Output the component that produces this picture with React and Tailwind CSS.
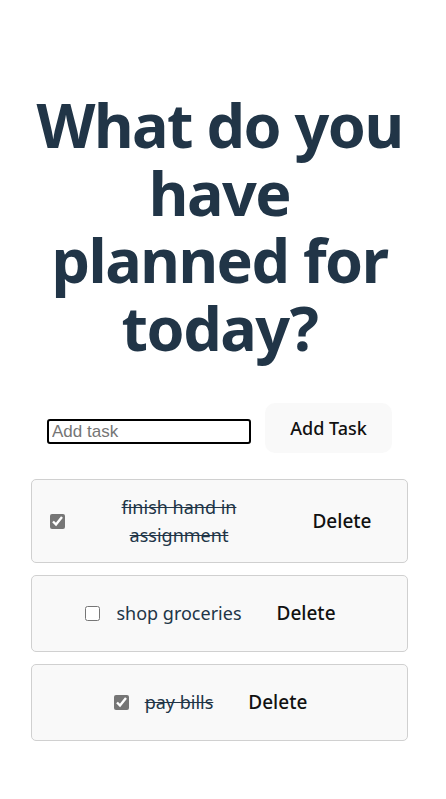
import React, { useState } from 'react';

const App = () => {
  const [tasks, setTasks] = useState([
    { id: 1, text: 'finish hand in assignment', done: true },
    { id: 2, text: 'shop groceries', done: false },
    { id: 3, text: 'pay bills', done: true }
  ]);
  const [input, setInput] = useState('');

  const addTask = () => {
    if (!input.trim()) return;
    setTasks([...tasks, { id: Date.now(), text: input, done: false }]);
    setInput('');
  };

  const toggle = (id) => {
    setTasks(tasks.map(t => (t.id === id ? { ...t, done: !t.done } : t)));
  };

  const remove = (id) => {
    setTasks(tasks.filter(t => t.id !== id));
  };

  return (
    <div className="min-h-screen bg-white font-['Noto_Sans',sans-serif] text-[#213547]">
      <div className="w-[377px] ml-[31px] pt-[91px] pb-10">
        <h1 className="text-[61px] leading-[67.5px] font-bold text-center tracking-[-1.5px]">
          What do you have planned for today?
        </h1>

        {/* formulario */}
        <div className="flex justify-center items-start gap-[14px] mt-[42px]">
          <input
            type="text"
            value={input}
            onChange={(e) => setInput(e.target.value)}
            placeholder="Add task"
            className="mt-[16px] w-[204px] h-[25px] px-[3px] border-2 border-black rounded-[3px] font-['Liberation_Sans',Arial,sans-serif] text-[17px] placeholder:text-[#757575] outline-none"
          />
          <button
            onClick={addTask}
            className="h-[50px] w-[127px] rounded-[10px] bg-[#f9f9f9] text-[18px] font-medium text-[#111]"
          >
            Add Task
          </button>
        </div>

        {/* lista */}
        <div className="flex flex-col gap-3 mt-[26px]">
          {tasks.map((task) => (
            <div
              key={task.id}
              className="flex items-center justify-center p-[12.5px] bg-[#f9f9f9] border border-[#d0d0d0] rounded-[5px]"
            >
              <input
                type="checkbox"
                checked={task.done}
                onChange={() => toggle(task.id)}
                className="w-[15px] h-[15px] ml-[5px] mr-[4px] accent-[#767676] shrink-0"
              />
              <span
                className={
                  'mx-3 text-center text-[18px] leading-[28.5px] ' +
                  (task.done ? 'line-through' : '')
                }
              >
                {task.text}
              </span>
              <button
                onClick={() => remove(task.id)}
                className="h-[50px] px-[23px] rounded-[10px] bg-[#f9f9f9] text-[19px] font-medium text-[#111] shrink-0"
              >
                Delete
              </button>
            </div>
          ))}
        </div>
      </div>
    </div>
  );
};

export default App;
